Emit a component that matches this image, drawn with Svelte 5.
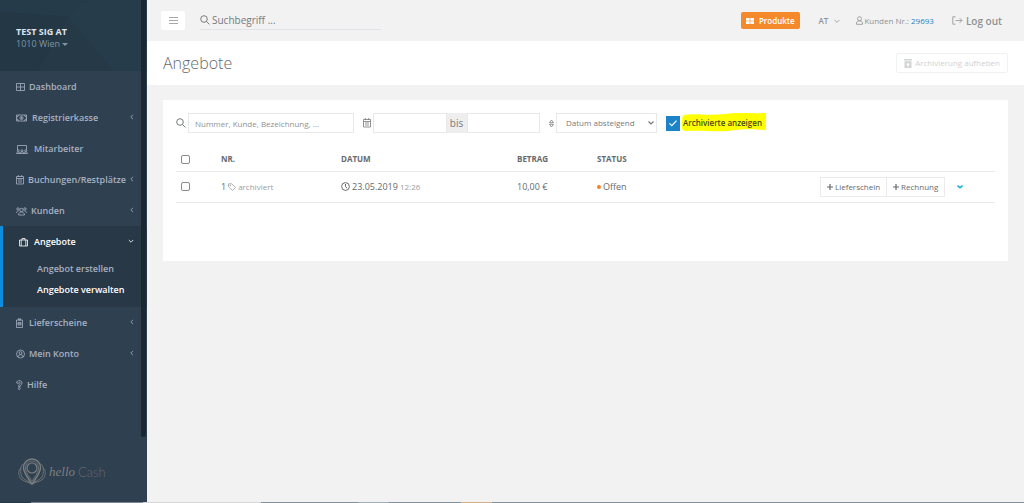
<script>
const navTop = [
  { icon: 'grid', width: 9, label: 'Dashboard' },
  { icon: 'cash', width: 12, label: 'Registrierkasse', more: true },
  { icon: 'team', width: 14, label: 'Mitarbeiter' },
  { icon: 'calendar', width: 8, label: 'Buchungen/Restplätze', more: true },
  { icon: 'users', width: 11, label: 'Kunden', more: true },
  {
    icon: 'case',
    width: 11,
    label: 'Angebote',
    active: true,
    children: ['Angebot erstellen', 'Angebote verwalten'],
  },
  { icon: 'clipboard', width: 9, label: 'Lieferscheine', more: true },
  { icon: 'account', width: 9, label: 'Mein Konto', more: true },
  { icon: 'help', width: 7, label: 'Hilfe' },
];

const offers = [
  { nr: 1, tag: 'archiviert', date: '23.05.2019', time: '12:26', amount: '10,00 €', status: 'Offen' },
];

let search = $state('');
let filter = $state('');
let from = $state('');
let to = $state('');
let sort = $state('desc');
let archived = $state(true);
let selected = $state([]);
let all = $derived(selected.length === offers.length);

function toggleAll() {
  selected = all ? [] : offers.map((o) => o.nr);
}
</script>

{#snippet calendar()}
  <path d="M.5 2.5h7v7.500h-7zM.5 4.500h7M2.300 1v2M5.700 1v2M2 6h4M2 8h4" />
{/snippet}

{#snippet magnifier()}
  <svg class="icon magnifier" width="10" height="10" viewBox="0 0 10 10">
    <circle cx="4" cy="4" r="3.3" /><path d="M6.4 6.4l3 3" />
  </svg>
{/snippet}

<div class="layout">
  <aside class="sidebar">
    <header class="company">
      <svg class="company__facets" viewBox="0 0 147 72" preserveAspectRatio="none">
        <path d="M0 0h147v72H0z" fill="#253947" />
        <path d="M0 0h85L68 17 0 12z" fill="#263b49" />
        <path d="M68 17L85 0h62v72h-33z" fill="#273c4b" />
        <path d="M0 12l68 5-30 55H0z" fill="#233745" />
      </svg>
      <strong>TEST SIG AT</strong>
      <button type="button" class="company__city">1010 Wien<i class="caret"></i></button>
    </header>

    <nav>
      {#each navTop as item}
        <div class="nav__group" class:nav__group--active={item.active}>
          <a class="nav__link" href="#top">
            <svg class="icon" width={item.width} height="12" viewBox="0 0 {item.width} 12">
              {#if item.icon === 'grid'}
                <path d="M.5 2.5h8v7h-8zM4.5 2.5v7M.5 6h8" />
              {:else if item.icon === 'cash'}
                <path d="M.5 3h10v6H.5zM.5 5a2 2 0 0 0 2-2M8.500 3a2 2 0 0 0 2 2M.5 7a2 2 0 0 1 2 2M8.500 9a2 2 0 0 1 2-2" />
                <circle cx="5.500" cy="6" r="1.600" /><path d="M5.500 5v2" />
              {:else if item.icon === 'team'}
                <path d="M1.500 7V2.500h9V7M.5 10.500c0-2 3.500-2 3.500 0 0-2 4-2 4 0 0-2 3.500-2 3.500 0z" />
                <circle cx="2.300" cy="7.700" r="1" /><circle cx="6" cy="7.700" r="1" /><circle cx="9.700" cy="7.700" r="1" />
              {:else if item.icon === 'calendar'}
                {@render calendar()}
              {:else if item.icon === 'users'}
                <circle cx="5.500" cy="5" r="1.700" /><circle cx="2" cy="4" r="1.200" /><circle cx="9" cy="4" r="1.200" />
                <path d="M2.500 10c0-4 6-4 6 0zM.5 8c0-1.500 1-2 2-2M10.500 8c0-1.500-1-2-2-2" />
              {:else if item.icon === 'case'}
                <path d="M.5 4h8v6h-8zM3 4V2.500h3V4M2.200 4v6M6.800 4v6" />
              {:else if item.icon === 'clipboard'}
                <path d="M.5 3h6v7.500h-6zM2.300 3V1.800h2.400V3zM2 5.500h3v2.500H2zM2 6.800h3" />
              {:else if item.icon === 'account'}
                <circle cx="4.500" cy="6" r="4" /><circle cx="4.500" cy="5" r="1.400" />
                <path d="M2 9c0-3 5-3 5 0" />
              {:else}
                <path d="M.6 4C.6.8 6 .8 6 4c0 2.200-1.800 1.700-1.800 3.500H2.500C2.500 5 4.300 5.200 4.300 4c0-1-1.800-1-1.800.3z" />
                <circle cx="3.300" cy="9.500" r="1" />
              {/if}
            </svg>
            <span>{item.label}</span>
            {#if item.more}
              <svg class="icon nav__arrow" width="4" height="6" viewBox="1 0 4 6"><path d="M4 .8L1.800 3 4 5.200" /></svg>
            {:else if item.children}
              <svg class="icon nav__arrow" width="6" height="6" viewBox="0 0 6 6"><path d="M.8 2L3 4.200 5.200 2" /></svg>
            {/if}
          </a>
          {#if item.children}
            <ul class="nav__sub">
              {#each item.children as child, i}
                <li><a href="#top" class:current={i === 1}>{child}</a></li>
              {/each}
            </ul>
          {/if}
        </div>
      {/each}
    </nav>

    <div class="logo">
      <svg class="icon" width="28" height="28" viewBox="0 0 28 28">
        <path stroke-width="1.500" d="M14 26C10 20 5.500 15 5.500 9.500a8.500 8.500 0 0 1 17 0C22.500 15 18 20 14 26z" />
        <circle cx="14" cy="10" r="5" stroke-width="1.200" />
        <path d="M14 23C10.500 18 7.500 14 7.500 9.500a6.500 6.500 0 0 1 13 0C20.500 14 17.500 18 14 23z" />
        <path d="M5.500 6C2 7 2 15 4 19c3 3 6 4 10 7M22.500 6C26 7 26 15 24 19c-3 3-6 4-10 7M3 10c-3 2-3 7 0 11 4 3 7 3 11 5M25 10c3 2 3 7 0 11-4 3-7 3-11 5" />
      </svg>
      <span class="logo__hello">hello</span>
      <span class="logo__cash">Cash</span>
    </div>
    <div class="sidebar__scroll"></div>
  </aside>

  <main>
    <div class="topbar">
      <button type="button" class="topbar__menu" aria-label="Menü">
        <svg class="icon" width="9" height="9" viewBox="0 0 9 9"><path d="M0 1.500h9M0 4.500h9M0 7.500h9" /></svg>
      </button>
      <label class="topbar__search">
        {@render magnifier()}
        <input type="text" placeholder="Suchbegriff ..." aria-label="Suchbegriff" bind:value={search} />
      </label>
      <button type="button" class="products">
        <svg width="8" height="8" viewBox="0 0 8 8"><path fill="#fff" d="M0 1h3.700v2.700H0zM4.300 1H8v2.700H4.300zM0 4.300h3.700V7H0zM4.300 4.300H8V7H4.300z" /></svg>
        Produkte
      </button>
      <button type="button" class="lang">
        AT
        <svg class="icon" width="6" height="6" viewBox="0 0 6 6"><path d="M.6 2L3 4.400 5.400 2" /></svg>
      </button>
      <div class="customer">
        <svg class="icon" width="7" height="9" viewBox="0 0 7 9"><circle cx="3.500" cy="2.700" r="2" /><path d="M.5 8.300V7c0-1.500 1-2 3-2s3 .5 3 2v1.300z" /></svg>
        <span>Kunden Nr.: <a href="#top">29693</a></span>
      </div>
      <a class="logout" href="#top">
        <svg class="icon" width="11" height="9" viewBox="0 0 11 9"><path d="M3.500.8H.8v7.400h2.700M3.500 4.500H10M7.500 2L10 4.500 7.500 7" /></svg>
        Log out
      </a>
    </div>

    <div class="heading">
      <h1>Angebote</h1>
      <button type="button" class="btn heading__btn" disabled>
        <svg width="8" height="9" viewBox="0 0 8 9"><path fill="#d2d4d5" fill-rule="evenodd" d="M0 0h8v1.500H0zM.5 2.200h7V9h-7zM3.400 7.800v-2H2l2-2 2 2H4.600v2z" /></svg>
        Archivierung aufheben
      </button>
    </div>

    <section class="panel">
      <div class="filters">
        <label class="field field--text">
          {@render magnifier()}
          <input class="control" type="text" placeholder="Nummer, Kunde, Bezeichnung, ..." aria-label="Suche" bind:value={filter} />
        </label>
        <div class="field field--range">
          <svg class="icon" width="8" height="12" viewBox="0 0 8 12">{@render calendar()}</svg>
          <div class="range">
            <input class="control" type="text" aria-label="Datum von" bind:value={from} />
            <span class="range__to">bis</span>
            <input class="control" type="text" aria-label="Datum bis" bind:value={to} />
          </div>
        </div>
        <div class="field field--sort">
          <svg class="icon" width="5" height="9" viewBox="0 0 5 9"><path d="M.5 3.700L2.500 1l2 2.700zM.5 5.300l2 2.700 2-2.700z" /></svg>
          <div class="select">
            <select class="control" aria-label="Sortierung" bind:value={sort}>
              <option value="desc">Datum absteigend</option>
              <option value="asc">Datum aufsteigend</option>
            </select>
            <svg class="icon" width="6" height="6" viewBox="0 0 6 6"><path d="M.5 1.500L3 4l2.500-2.500" /></svg>
          </div>
        </div>
        <label class="archived">
          <input type="checkbox" bind:checked={archived} />
          <svg class="icon archived__tick" width="8" height="8" viewBox="0 0 8 8"><path d="M.5 4.300l2.300 2.300 4.700-5" /></svg>
          <span class="archived__label">
            <svg class="archived__mark" viewBox="0 0 82 19" preserveAspectRatio="none">
              <path fill="#ff0" d="M2 2C12 0 25 3 42 1 55-1 68 1 82 0v13c0 3 0 5-2 4-10-1-25-1-35 1-16 1-28-1-40 0-6 0-5-3-5-8C0 6 0 3 2 2z" />
            </svg>
            Archivierte anzeigen
          </span>
        </label>
      </div>

      <table>
        <thead>
          <tr>
            <th class="col-check"><input class="tick" type="checkbox" aria-label="Alle auswählen" checked={all} onchange={toggleAll} /></th>
            <th class="col-nr">NR.</th>
            <th class="col-date">DATUM</th>
            <th class="col-amount">BETRAG</th>
            <th>STATUS</th>
            <th class="col-actions"></th>
          </tr>
        </thead>
        <tbody>
          {#each offers as offer}
            <tr>
              <td><input class="tick" type="checkbox" aria-label="Angebot {offer.nr}" value={offer.nr} bind:group={selected} /></td>
              <td>
                <div class="cell">
                  {offer.nr}
                  <svg class="icon muted" width="8" height="8" viewBox="0 0 8 8"><path d="M.5.8h3.200l3.800 3.700-3 3L.5 3.800z" /><circle cx="2.200" cy="2.400" r=".4" /></svg>
                  <small>{offer.tag}</small>
                </div>
              </td>
              <td>
                <div class="cell">
                  <svg class="icon clock" width="9" height="9" viewBox="0 0 9 9"><circle cx="4.500" cy="4.500" r="3.900" /><path d="M4.500 2v2.700L6 6" /></svg>
                  {offer.date}
                  <small>{offer.time}</small>
                </div>
              </td>
              <td>{offer.amount}</td>
              <td><div class="cell"><i class="dot"></i>{offer.status}</div></td>
              <td>
                <div class="actions">
                  {#each ['Lieferschein', 'Rechnung'] as action}
                    <button type="button" class="btn">
                      <svg class="icon plus" width="6" height="6" viewBox="0 0 6 6"><path d="M3 0v6M0 3h6" /></svg>
                      {action}
                    </button>
                  {/each}
                  <button type="button" class="actions__more" aria-label="Mehr">
                    <svg class="icon" width="6" height="6" viewBox="0 0 6 6"><path d="M.5 1.700L3 3.800l2.500-2.100" /></svg>
                  </button>
                </div>
              </td>
            </tr>
          {/each}
        </tbody>
      </table>
    </section>
  </main>
  <div class="taskbar"></div>
</div>

<style>
:global(body) {
  margin: 0;
  background: #f2f2f2;
}

.layout {
  display: flex;
  min-height: 100vh;
  color: #676a6c;
  font: 9px/14px "Open Sans", sans-serif;
}

.layout * {
  box-sizing: border-box;
}

button, input, select {
  margin: 0;
  padding: 0;
  border: 0;
  background: none;
  color: inherit;
  font: inherit;
}

a {
  color: inherit;
  text-decoration: none;
}

.icon {
  flex: none;
  fill: none;
  stroke: currentColor;
  stroke-width: 0.8;
}

.magnifier {
  stroke-width: 1;
}

.sidebar {
  position: relative;
  display: flex;
  flex: none;
  flex-direction: column;
  width: 147px;
  background: #2f4050;
  color: #a7b1c2;
}

.company {
  position: relative;
  display: flex;
  flex-direction: column;
  align-items: flex-start;
  height: 71px;
  padding: 26px 16px 0;
  line-height: 12px;
}

.company__facets {
  position: absolute;
  inset: 0;
  width: 100%;
  height: 100%;
}

.company strong {
  position: relative;
  color: #dfe4ed;
}

.company__city {
  position: relative;
  display: flex;
  align-items: center;
  gap: 2px;
  color: #8095a8;
}

.caret {
  border: 3px solid transparent;
  border-top-color: currentColor;
  border-bottom: 0;
}

.nav__link {
  display: flex;
  align-items: center;
  gap: 4px;
  height: 31px;
  padding: 0 11px 0 16px;
  font-weight: 600;
}

.nav__arrow {
  margin: 0 2px 2px auto;
}

.nav__group--active {
  padding-bottom: 7px;
  border-left: 3px solid #0d8ddb;
  background: #293846;
}

.nav__group--active .nav__link,
.nav__sub .current {
  color: #fff;
}

.nav__sub {
  margin: 0;
  padding: 1px 0 0 34px;
  list-style: none;
  font-weight: 600;
  line-height: 21px;
}

.logo {
  display: flex;
  align-items: center;
  gap: 3px;
  margin-top: auto;
  padding: 0 18px 17px;
  color: #7c7f80;
}

.logo__hello {
  font: italic 13px/20px "Liberation Serif", serif;
}

.logo__cash {
  color: #626970;
  font: 300 13px/20px Lato, sans-serif;
}

.sidebar__scroll {
  position: absolute;
  top: 0;
  right: 1px;
  width: 5px;
  height: 437px;
  border-radius: 0 0 3px 3px;
  background: #1b2731;
}

main {
  flex: 1;
  min-width: 0;
}

.topbar {
  display: flex;
  align-items: center;
  height: 41px;
  padding: 0 22px 0 14px;
  color: #8f9294;
}

.topbar__menu {
  width: 24px;
  height: 19px;
  border-radius: 2px;
  background: #fff;
  line-height: 9px;
}

.topbar__search {
  display: flex;
  align-items: center;
  gap: 2px;
  width: 181px;
  height: 19px;
  margin: 0 auto 0 15px;
  border-bottom: 1px solid #e1e3e8;
  color: #777a7c;
}

.topbar__search input {
  flex: 1;
  min-width: 0;
  font-size: 10px;
  outline: 0;
}

input::placeholder {
  color: inherit;
  opacity: 1;
}

.products {
  display: flex;
  align-items: center;
  gap: 5px;
  height: 17px;
  padding: 0 5px;
  border-radius: 2px;
  background: #f58a2c;
  color: #fff;
  font-size: 8px;
  font-weight: 600;
}

.lang {
  display: flex;
  align-items: center;
  gap: 6px;
  margin-left: 19px;
  font-size: 8px;
  font-weight: 600;
}

.customer {
  display: flex;
  align-items: center;
  gap: 1px;
  margin-left: 16px;
  font-size: 8px;
}

.customer a {
  color: #1c84c6;
}

.logout {
  display: flex;
  align-items: center;
  gap: 3px;
  margin-left: 18px;
  font-size: 10px;
  font-weight: 600;
}

.heading {
  display: flex;
  align-items: center;
  justify-content: space-between;
  height: 44px;
  padding: 0 16px;
  background: #fff;
}

h1 {
  margin: 0;
  font-size: 16px;
  font-weight: 300;
  line-height: 20px;
}

.btn {
  display: flex;
  align-items: center;
  gap: 2px;
  height: 20px;
  padding: 0 6px;
  border: 1px solid #ebebeb;
  background: #fff;
  font-size: 8px;
}

.heading__btn {
  gap: 3px;
  padding: 0 7px;
  border-color: #f1f1f1;
  border-radius: 2px;
  color: #cfd1d2;
}

.panel {
  min-height: 161px;
  margin: 15px 16px;
  padding: 13px;
  background: #fff;
}

.filters {
  display: flex;
  align-items: center;
  gap: 9px;
}

.field {
  display: flex;
  align-items: center;
  gap: 2px;
  color: #777a7c;
}

.control {
  width: 100%;
  min-width: 0;
  height: 20px;
  padding: 0 6px;
  border: 1px solid #e7e8ea;
  font-size: 8px;
}

.field--text {
  width: 178px;
}

.field--text input {
  color: #8f9294;
}

.field--range {
  width: 177px;
}

.range {
  display: flex;
  flex: 1;
}

.range .control {
  flex: 1;
}

.range__to {
  width: 20px;
  background: #eee;
  font-size: 10px;
  line-height: 20px;
  text-align: center;
}

.select {
  position: relative;
  width: 101px;
}

.select .control {
  padding: 0 9px;
  appearance: none;
  background: #fff;
}

.select .icon {
  position: absolute;
  top: 7px;
  right: 3px;
  stroke-width: 1.2;
}

.archived {
  position: relative;
  display: flex;
  align-items: center;
  gap: 3px;
}

.archived input {
  width: 14px;
  height: 15px;
  appearance: none;
  border: 1px solid #1c84c6;
}

.archived input:checked {
  background: #1c84c6;
}

.archived__tick {
  position: absolute;
  left: 3px;
  color: #fff;
  stroke-width: 1.2;
}

.archived__label {
  position: relative;
  isolation: isolate;
  color: #45480f;
  font-size: 8px;
  font-weight: 600;
}

.archived__mark {
  position: absolute;
  z-index: -1;
  inset: -3px -4px -2px -1px;
  width: calc(100% + 5px);
  height: calc(100% + 5px);
}

table {
  width: 100%;
  margin-top: 15px;
  border-collapse: collapse;
  table-layout: fixed;
}

th, td {
  height: 31px;
  padding: 0 5px;
  border-bottom: 1px solid #e7eaec;
  text-align: left;
  vertical-align: middle;
}

th {
  height: 23px;
  font-size: 8px;
  font-weight: 700;
}

.col-check { width: 40px; }
.col-nr { width: 120px; }
.col-date { width: 176px; }
.col-amount { width: 80px; }
.col-actions { width: 180px; }

.tick {
  display: block;
  width: 9px;
  height: 9px;
  border: 1px solid #8b8b8b;
  border-radius: 2px;
  appearance: none;
}

.tick:checked {
  background: #1c84c6;
}

.cell {
  display: flex;
  align-items: center;
  gap: 2px;
}

.cell small,
.muted {
  color: #9b9ea0;
  font-size: 8px;
}

.clock {
  stroke-width: 1;
}

.dot {
  width: 4px;
  height: 4px;
  border-radius: 50%;
  background: #f58220;
}

.actions {
  display: flex;
  align-items: center;
}

.actions .btn + .btn {
  border-left: 0;
}

.plus {
  stroke-width: 1.2;
}

.actions__more {
  display: flex;
  margin-left: 12px;
  color: #12aee0;
}

.actions__more .icon {
  stroke-width: 1.6;
}

/* thin colour line along the bottom edge of the window */
.taskbar {
  position: fixed;
  right: 0;
  bottom: 0;
  left: 0;
  height: 1px;
  background: linear-gradient(90deg, #22394a 3%, #7f8791 3% 14%, #d5d5d5 14% 25.500%, #82929a 25.500% 35%, #a0aeb3 35% 38%, #82929a 38% 45%, #d9ae84 45% 48%, #82929a 48%);
}
</style>
